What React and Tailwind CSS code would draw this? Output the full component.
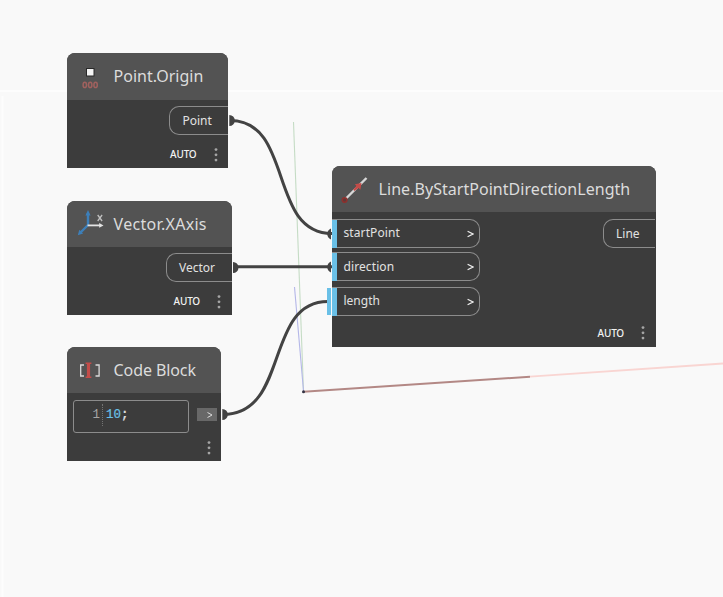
import React from "react";

const FONT = "font-['Noto_Sans','Open_Sans',sans-serif]";

function Node({ className, headerClass, icon, title, titleClass, children }) {
  return (
    <section className={`absolute flex flex-col rounded-t-[8px] bg-[#3c3c3c] ${className}`}>
      <header className={`flex shrink-0 items-center rounded-t-[8px] bg-[#535353] ${headerClass}`}>
        <span className="flex w-[46.6px] shrink-0 pl-[8px]">{icon}</span>
        <h2 className={`whitespace-nowrap text-[16px] leading-[22px] text-[#dcdcdc] ${titleClass}`}>{title}</h2>
      </header>
      {children}
    </section>
  );
}

function Output({ label, className }) {
  return (
    <div className={`flex h-[29px] items-center rounded-l-[10px] border border-r-0 border-[#8c8c8c] text-[12px] text-[#e2e2e2] ${className}`}>
      <span>{label}</span>
    </div>
  );
}

function Input({ label, className, labelClass, children }) {
  return (
    <div className={`relative flex h-[29px] w-[148px] items-center rounded-r-[10px] border border-l-0 border-[#8c8c8c] text-[12px] text-[#e2e2e2] ${className}`}>
      <i className="-my-px h-[28px] w-[5px] bg-[#6ac0e7]" />
      {children}
      <span className={`ml-[6.5px] flex-1 ${labelClass}`}>{label}</span>
      <Chevron className="mr-[5.5px]" />
    </div>
  );
}

function Chevron({ className }) {
  return (
    <svg className={className} width="7" height="8" viewBox="0 0 7 8" fill="none" stroke="#eeeeee" strokeWidth="1.2">
      <path d="M.6 1.2 6 4 .6 6.8" />
    </svg>
  );
}

function Dots() {
  return (
    <svg width="4" height="14" viewBox="0 0 4 14" fill="#a6a6a6">
      <circle cx="2" cy="1.6" r="1.4" />
      <circle cx="2" cy="6.8" r="1.4" />
      <circle cx="2" cy="12.1" r="1.4" />
    </svg>
  );
}

function Footer({ auto = true, className }) {
  return (
    <footer className={`mt-auto flex h-[14px] items-center justify-end ${className}`}>
      {auto && <span className="mr-[17px] text-[10px] font-medium tracking-[-0.2px] text-[#f2f2f2]">AUTO</span>}
      <Dots />
    </footer>
  );
}

function PointIcon() {
  return (
    <svg width="30" height="30" viewBox="0 0 30 30">
      <rect x="11.5" y="7.5" width="7.5" height="7.5" fill="#f4f4f4" stroke="#292929" />
      <g fill="none" stroke="#a0615e" strokeWidth="1.5">
        <ellipse cx="9.8" cy="23.9" rx="1.7" ry="2.6" />
        <ellipse cx="15.2" cy="23.9" rx="1.7" ry="2.6" />
        <ellipse cx="20.6" cy="23.9" rx="1.7" ry="2.6" />
      </g>
    </svg>
  );
}

function AxisIcon() {
  return (
    <svg width="30" height="30" viewBox="0 0 30 30" fill="none">
      <path d="M13 4v12L5 24" stroke="#3d7fb9" strokeWidth="2.4" />
      <path d="m13 1 2.6 5.5h-5.2zM2.8 26.3l1.5-5.6 3.8 3.8z" fill="#3d7fb9" />
      <path d="M12.5 16.4H25" stroke="#e4e4e4" strokeWidth="1.8" />
      <path d="m28.5 16.4-4.3-2.3v4.600z" fill="#e4e4e4" />
      <path d="m22.700 6 4.400 6m0-6-4.400 6" stroke="#c0c0c0" strokeWidth="1.3" />
    </svg>
  );
}

function CodeIcon() {
  return (
    <svg width="30" height="30" viewBox="0 0 30 30" fill="none">
      <path d="M9 10H5.700v11H9M20.500 10h3.600v11h-3.600" stroke="#dadada" strokeWidth="1.3" />
      <path d="M13.500 8v14.500" stroke="#c34c49" strokeWidth="3.2" />
      <path d="M10.600 8.300h5.800M10.600 22.300h5.800" stroke="#c34c49" strokeWidth="1.5" />
    </svg>
  );
}

function LineIcon() {
  return (
    <svg width="30" height="30" viewBox="0 0 30 30" fill="none">
      <path d="M5 25.500 26.500 4" stroke="#d8d8d8" strokeWidth="2.4" />
      <path d="m15.500 15 4-4" stroke="#c34c49" strokeWidth="2.4" />
      <path d="m14.800 10.200 6.700-1.200-1.100 6.700-2.200-1.900-3.700 3.200-1.300-1.300 3.300-3.700z" fill="#c34c49" />
      <circle cx="4.600" cy="26" r="2.300" fill="#5f3a38" stroke="#8f302d" strokeWidth="1.5" />
    </svg>
  );
}

function Backdrop() {
  return (
    <svg className="absolute inset-0" width="723" height="597" viewBox="0 0 723 597" fill="none">
      <path d="M0 91h723M2.5 96v501" stroke="#fdfdfd" strokeWidth="2" />
      <path d="M293.5 122 303.5 391" stroke="#c5dcc5" strokeWidth="1.1" />
      <path d="M294.5 287 303.5 391" stroke="#b4b7e8" strokeWidth="1.1" />
      <path d="m530 376.7 193-13.2" stroke="#f9d5d2" strokeWidth="1.8" />
      <path d="m303.5 391.8 226.5-15.1" stroke="#b38885" strokeWidth="2" />
      <circle cx="303.5" cy="391.8" r="1.5" fill="#333344" />
      <g stroke="#434343" strokeWidth="3">
        <path d="M230 120.5C294 120.5 268 233.5 332 233.5" />
        <path d="M234 266.8H332" />
        <path d="M223 414.5C290 414.5 264 301.5 328 301.5" />
      </g>
      <g fill="#434343">
        <path d="M229.3 115a5.5 5.5 0 0 1 0 11zM233 262a5.5 5.5 0 0 1 0 11zM222.3 409a5.5 5.5 0 0 1 0 11z" />
        <path d="M331 228.500c-5 2-5 9 0 11zM331 261.500c-5 2-5 9 0 11z" />
      </g>
    </svg>
  );
}

export default function App() {
  return (
    <main className={`relative h-[597px] w-[723px] overflow-hidden bg-[#f9f9f9] ${FONT}`}>
      <Backdrop />
      <Node className="left-[67px] top-[53px] h-[115px] w-[161px]" headerClass="h-[47px] pb-px" icon={<PointIcon />} title="Point.Origin">
        <Output label="Point" className="ml-auto mt-[6px] w-[59px] pl-[12.5px]" />
        <Footer className="mb-[6.5px] pr-[10.5px]" />
      </Node>
      <Node className="left-[67px] top-[201px] h-[114px] w-[165px]" headerClass="h-[46px]" icon={<AxisIcon />} title="Vector.XAxis" titleClass="tracking-[0.3px]">
        <Output label="Vector" className="ml-auto mt-[6px] w-[66px] pl-[12px]" />
        <Footer className="mb-[6.5px] pr-[11px]" />
      </Node>
      <Node className="left-[67px] top-[347px] h-[114px] w-[154px]" headerClass="h-[46px]" icon={<CodeIcon />} title="Code Block" titleClass="tracking-[-0.1px]">
        <div className="mt-[7px] flex pl-[6px] pr-[4px]">
          <div className="flex h-[33px] w-[116px] items-start rounded-[3px] border border-[#8c8c8c] pt-[3px] font-['Liberation_Mono',monospace] text-[12.5px] leading-[22px] text-[#e4e4e4]">
            <span className="w-[29px] border-r border-dotted border-[#747474] pr-[2px] text-right text-[#a5a5a5]">1</span>
            <span className="ml-[3px] text-[#6ac0e7] [-webkit-text-stroke:0.2px_#6ac0e7]">10</span>
            <span className="[-webkit-text-stroke:0.3px_#e4e4e4]">;</span>
          </div>
          <div className="ml-auto mt-[8px] flex h-[13px] w-[20px] items-center justify-end bg-[#686868] pr-[4px] pt-px">
            <svg width="6" height="8" viewBox="0 0 6 8" fill="none" stroke="#dddddd">
              <path d="M.5 1.5 5 4 .5 6.5" />
            </svg>
          </div>
        </div>
        <Footer auto={false} className="mb-[6.5px] pr-[10.5px]" />
      </Node>
      <Node className="left-[332px] top-[166px] h-[181px] w-[324px]" headerClass="h-[46px]" icon={<LineIcon />} title="Line.ByStartPointDirectionLength" titleClass="tracking-[0.04px]">
        <div className="mt-[7px] flex items-start justify-between pr-px">
          <div className="flex flex-col">
            <Input label="startPoint" labelClass="tracking-[0.1px] relative -top-px" />
            <Input label="direction" className="mt-[4px]" labelClass="tracking-[0.1px]" />
            <Input label="length" className="mt-[6px]" labelClass="relative -top-px">
              <i className="absolute -left-[5px] top-0 h-[27px] w-[4px] bg-[#6ac0e7]" />
            </Input>
          </div>
          <Output label="Line" className="w-[52px] pl-[12px]" />
        </div>
        <Footer className="mb-[7px] pr-[11px]" />
      </Node>
    </main>
  );
}
